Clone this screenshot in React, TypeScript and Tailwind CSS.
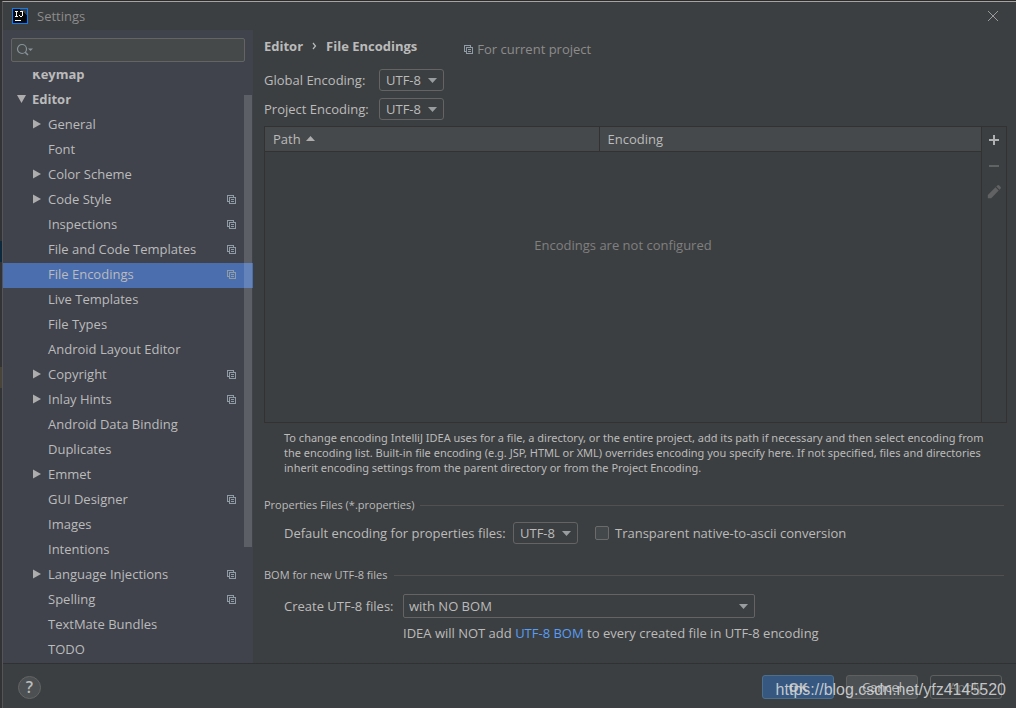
import { useState } from "react";

type TreeItem = {
    label: string;
    arrow?: "open" | "closed";
    level: 0 | 1;
    project?: boolean;
};

const TREE: TreeItem[] = [
    { label: "Keymap", level: 0 },
    { label: "Editor", level: 0, arrow: "open" },
    { label: "General", level: 1, arrow: "closed" },
    { label: "Font", level: 1 },
    { label: "Color Scheme", level: 1, arrow: "closed" },
    { label: "Code Style", level: 1, arrow: "closed", project: true },
    { label: "Inspections", level: 1, project: true },
    { label: "File and Code Templates", level: 1, project: true },
    { label: "File Encodings", level: 1, project: true },
    { label: "Live Templates", level: 1 },
    { label: "File Types", level: 1 },
    { label: "Android Layout Editor", level: 1 },
    { label: "Copyright", level: 1, arrow: "closed", project: true },
    { label: "Inlay Hints", level: 1, arrow: "closed", project: true },
    { label: "Android Data Binding", level: 1 },
    { label: "Duplicates", level: 1 },
    { label: "Emmet", level: 1, arrow: "closed" },
    { label: "GUI Designer", level: 1, project: true },
    { label: "Images", level: 1 },
    { label: "Intentions", level: 1 },
    { label: "Language Injections", level: 1, arrow: "closed", project: true },
    { label: "Spelling", level: 1, project: true },
    { label: "TextMate Bundles", level: 1 },
    { label: "TODO", level: 1 },
];

const ENCODINGS = ["UTF-8", "GBK", "ISO-8859-1", "US-ASCII", "UTF-16"];

const ProjectIcon = () => (
    <svg width="9" height="9" viewBox="0 0 9 9" fill="none" stroke="#8f9ba5" className="shrink-0" shapeRendering="crispEdges">
        <path d="M2 6.5H.5V.5h6V2" />
        <path d="M2.5 2.5h6v6h-6z" />
        <path d="M4 4.5h3M4 6.5h3" />
    </svg>
);

const TreeArrow = ({ kind }: { kind?: "open" | "closed" }) => (
    <svg width="10" height="10" viewBox="0 0 10 10" fill="#adadad" className="shrink-0">
        {kind === "open" && <path d="M1 1h9L5.500 9z" />}
        {kind === "closed" && <path d="M1 .5v9L9 5z" />}
    </svg>
);

const Logo = () => (
    <svg width="16" height="16" viewBox="0 0 16 16" shapeRendering="crispEdges">
        <path fill="#087cfa" d="M0 0h16v16H0z" />
        <path fill="#0b0b0b" d="M1 1h14v14H1z" />
        <path fill="#3d3d3d" d="M7 1h8v6z" />
        <path fill="#fff" d="M3 3h3v1H3zM4 4h1v4H4zM3 8h3v1H3zM8 3h3v1H8zM10 4h1v4h-1zM7 7h1v1H7zM8 8h2v1H8zM3 12h6v1H3z" />
    </svg>
);

type DropdownProps = {
    id: string;
    options: string[];
    wide?: boolean;
};

const Dropdown = ({ id, options, wide }: DropdownProps) => (
    <div className={wide ? "relative w-[352px]" : "relative w-[65px]"}>
        <select
            id={id}
            className={`block w-full appearance-none border border-[#646464] bg-[#3c3f41] pr-5 text-[#bbbbbb] outline-none ${wide ? "h-6 rounded-xs pl-[5px]" : "h-[22px] rounded-[3px] pl-1.5"}`}
        >
            {options.map((o) => <option key={o}>{o}</option>)}
        </select>
        <svg width="9" height="5" viewBox="0 0 9 5" fill="#9a9da0" className="pointer-events-none absolute top-1/2 right-[7px] -mt-0.5">
            <path d="M0 0h9L4.500 5z" />
        </svg>
    </div>
);

const SectionTitle = ({ title }: { title: string }) => (
    <h2 className="flex h-4 items-center gap-1.5 text-[11px]">
        {title}
        <span className="mr-[3px] h-px flex-1 bg-[#515151]" />
    </h2>
);

const Sidebar = () => {
    const [selected, setSelected] = useState("File Encodings");

    return (
        <aside className="flex w-[250px] shrink-0 flex-col bg-[#40434c]">
            <div className="mx-2 mt-2 flex h-6 items-center rounded-xs border border-[#646464] bg-[#45494a] px-1">
                <svg width="18" height="14" viewBox="0 0 18 14" fill="none" stroke="#87939a" className="shrink-0">
                    <circle cx="6" cy="6" r="4.500" strokeWidth="1.200" />
                    <path d="M9.200 9.200 12 12" strokeWidth="1.500" />
                    <path d="M12 5.500h5L14.500 8z" fill="#87939a" stroke="none" />
                </svg>
                <input type="text" aria-label="Search settings" className="min-w-0 flex-1 bg-transparent pl-1 outline-none" />
            </div>
            <div className="relative mt-2.5 min-h-0 flex-1 overflow-hidden">
                <ul className="-mt-[9px]">
                    {TREE.map((item) => (
                        <li key={item.label}>
                            <button
                                type="button"
                                onClick={() => setSelected(item.label)}
                                className={`flex h-[25px] w-full items-center gap-1.5 pr-[17px] pb-[3px] text-left ${item.level === 0 ? "pl-[13px] font-bold" : "pl-[29px]"} ${selected === item.label ? "bg-[#4b6eaf]" : ""}`}
                            >
                                <TreeArrow kind={item.arrow} />
                                <span className="flex-1 whitespace-nowrap">{item.label}</span>
                                {item.project && <ProjectIcon />}
                            </button>
                        </li>
                    ))}
                </ul>
                <div className="absolute top-[23px] right-px h-[452px] w-2 bg-white/15" />
            </div>
        </aside>
    );
};

const EncodingTable = () => (
    <div className="mt-1.5 flex min-h-0 flex-1 border border-[#323232]">
        <table className="h-full flex-1 table-fixed border-collapse">
            <thead>
                <tr className="h-6 bg-[#45494b] text-left">
                    <th className="w-[334px] border-r border-b border-[#323232] px-2 font-normal">
                        <span className="flex items-center gap-[5px]">
                            Path
                            <svg width="9" height="5" viewBox="0 0 9 5" fill="#adadad"><path d="M0 5h9L4.500 0z" /></svg>
                        </span>
                    </th>
                    <th className="border-b border-[#323232] px-2 font-normal">Encoding</th>
                </tr>
            </thead>
            <tbody>
                <tr>
                    <td colSpan={2} className="pt-[85px] text-center align-top text-[#808080]">Encodings are not configured</td>
                </tr>
            </tbody>
        </table>
        <div className="flex w-[25px] flex-col items-center border-l border-[#323232]">
            <button type="button" aria-label="Add" className="flex h-[26px] items-center">
                <svg width="10" height="10" viewBox="0 0 10 10" fill="#afb1b3"><path d="M4 0h2v4h4v2H6v4H4V6H0V4h4z" /></svg>
            </button>
            <button type="button" aria-label="Remove" className="flex h-[26px] items-center">
                <svg width="10" height="2" viewBox="0 0 10 2" fill="#606263"><path d="M0 0h10v2H0z" /></svg>
            </button>
            <button type="button" aria-label="Edit" className="flex h-[26px] items-center">
                <svg width="14" height="14" viewBox="0 0 14 14" fill="#606263">
                    <path d="M8.500 2.300 11.700 5.500 4.200 13.300H.800V10z" />
                    <path d="M9.300 1.500 10.300.6a1.400 1.400 0 0 1 2 0l1.100 1.100a1.400 1.400 0 0 1 0 2L12.500 4.700z" />
                </svg>
            </button>
        </div>
    </div>
);

const App = () => {
    const [transparent, setTransparent] = useState(false);

    return (
        <div className="flex h-screen flex-col overflow-hidden bg-[#2b2b2b] pt-px font-['Open_Sans','Noto_Sans',sans-serif] text-[13px] leading-4 text-[#bbbbbb]">
            <div className="flex min-h-0 flex-1">
                <div className="flex w-0.5 shrink-0 flex-col bg-[#313335]">
                    <span className="mt-60 h-[21px] bg-[#0d293e]" />
                    <span className="mt-[105px] h-[21px] bg-[#49443a]" />
                </div>
                <div className="flex min-w-0 flex-1 flex-col border-t border-l border-t-[#a8a3a3] border-l-[#555555] bg-[#3c3f41]">
                    <header className="flex h-7 shrink-0 items-center pr-[17px] pl-[9px]">
                        <Logo />
                        <h1 className="ml-[9px] flex-1 text-[#8c8c8c]">Settings</h1>
                        <button type="button" aria-label="Close">
                            <svg width="12" height="12" viewBox="0 0 12 12" stroke="#9a9a9a"><path d="m1 1 10 10M11 1 1 11" /></svg>
                        </button>
                    </header>

                    <div className="flex min-h-0 flex-1">
                        <Sidebar />
                        <main className="flex min-w-0 flex-1 flex-col pr-[9px] pb-[22px] pl-[11px]">
                            <div className="mt-2 flex h-[22px] shrink-0 items-start">
                                <nav className="flex items-center gap-[9px] font-bold">
                                    <span>Editor</span>
                                    <svg width="5" height="8" viewBox="0 0 5 8" fill="none" stroke="#bbbbbb" strokeWidth="1.200"><path d="m1 1 2.500 3L1 7" /></svg>
                                    <span>File Encodings</span>
                                </nav>
                                <p className="mt-[3px] ml-[47px] flex items-center gap-1 text-[#8c8c8c]">
                                    <ProjectIcon />
                                    For current project
                                </p>
                            </div>

                            <div className="mt-[9px] grid shrink-0 grid-cols-[115px_1fr] items-center gap-y-[7px]">
                                <label htmlFor="global-encoding">Global Encoding:</label>
                                <Dropdown id="global-encoding" options={ENCODINGS} />
                                <label htmlFor="project-encoding">Project Encoding:</label>
                                <Dropdown id="project-encoding" options={ENCODINGS} />
                            </div>

                            <EncodingTable />

                            <p className="mt-[7px] ml-5 pr-3 font-['Noto_Sans','Open_Sans',sans-serif] text-[11px] leading-[15px]">
                                To change encoding IntelliJ IDEA uses for a file, a directory, or the entire project, add its path if necessary and then select encoding from the encoding list. Built-in file encoding (e.g. JSP, HTML or XML) overrides encoding you specify here. If not specified, files and directories inherit encoding settings from the parent directory or from the Project Encoding.
                            </p>

                            <section className="mt-[22px]">
                                <SectionTitle title="Properties Files (*.properties)" />
                                <div className="mt-[9px] ml-5 flex items-center">
                                    <label htmlFor="properties-encoding" className="w-[229px]">Default encoding for properties files:</label>
                                    <Dropdown id="properties-encoding" options={ENCODINGS} />
                                    <label className="ml-[17px] flex items-center gap-1.5">
                                        <input
                                            type="checkbox"
                                            checked={transparent}
                                            onChange={(e) => setTransparent(e.target.checked)}
                                            className="size-3.5 appearance-none rounded-xs border border-[#6b6b6b] bg-[#43494a] checked:bg-[#4b6eaf]"
                                        />
                                        Transparent native-to-ascii conversion
                                    </label>
                                </div>
                            </section>

                            <section className="mt-[23px]">
                                <SectionTitle title="BOM for new UTF-8 files" />
                                <div className="mt-[11px] ml-5 grid grid-cols-[119px_1fr] items-center gap-y-[7px]">
                                    <label htmlFor="bom">Create UTF-8 files:</label>
                                    <Dropdown id="bom" wide options={["with NO BOM", "with BOM", "with BOM under Windows, with no BOM otherwise"]} />
                                    <p className="col-start-2">
                                        IDEA will NOT add <a href="#bom" className="text-[#589df6]">UTF-8 BOM</a> to every created file in UTF-8 encoding
                                    </p>
                                </div>
                            </section>
                        </main>
                    </div>

                    <footer className="relative flex h-[45px] shrink-0 items-center gap-3 border-t border-[#2f3133] pt-0.5 pr-3.5 pl-[15px]">
                        <button type="button" aria-label="Help" className="mr-auto flex size-[23px] items-center justify-center rounded-full border border-[#646464] bg-[#4c5052] text-base font-semibold">?</button>
                        <button type="button" className="h-6 w-[72px] rounded-[3px] border border-[#4c708c] bg-[#365880] font-bold">OK</button>
                        <button type="button" className="h-6 w-[72px] rounded-[3px] border border-[#5e6060] bg-[#4c5052]">Cancel</button>
                        <button type="button" className="h-6 w-[72px] rounded-[3px] border border-[#5e6060] text-[#777777]">Apply</button>
                        <span className="pointer-events-none absolute right-2.5 bottom-2 font-['Liberation_Sans',Arial,sans-serif] text-base leading-5 text-[#d4d6d8]/90">https://blog.csdn.net/yfz4145520</span>
                    </footer>
                </div>
            </div>
        </div>
    );
};

export default App;
